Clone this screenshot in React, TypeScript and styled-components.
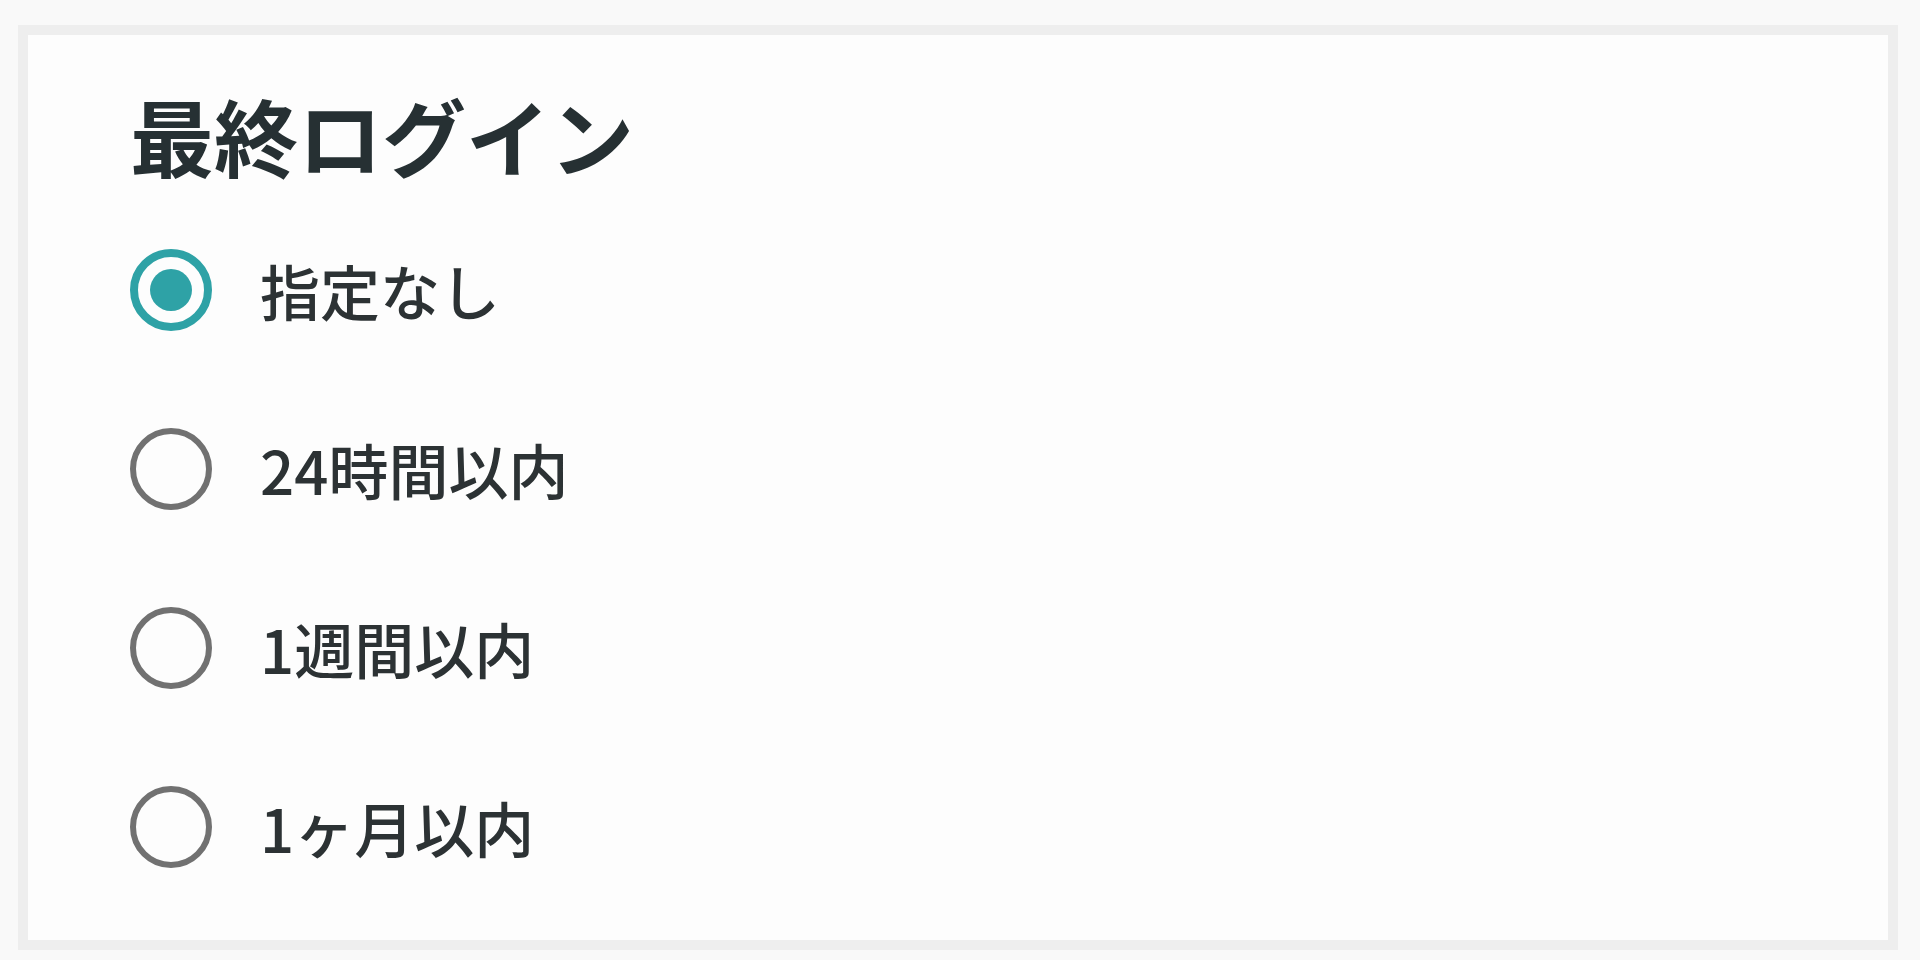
import React, { useState } from "react";
import styled, { createGlobalStyle } from "styled-components";

const GlobalStyle = createGlobalStyle`
  html, body {
    margin: 0;
    padding: 0;
    background: #f9f9f9;
  }
  body {
    font-family: "Noto Sans CJK JP", "Noto Sans", sans-serif;
    color: #2f3537;
  }
  * { box-sizing: border-box; }
`;

const Page = styled.div`
  width: 1920px;
  height: 960px;
  padding: 25px 22px 10px 18px;
`;

const Card = styled.section`
  height: 100%;
  border: 10px solid #eeeeee;
  background: #fdfdfd;
  padding: 58px 0 0 102px;
  display: flex;
  flex-direction: column;
`;

const Title = styled.h2`
  margin: 0 0 23px 0;
  font-size: 84px;
  line-height: 84px;
  font-weight: 700;
  color: #263033;
  letter-spacing: 0;
`;

const Options = styled.div`
  display: flex;
  flex-direction: column;
`;

const Row = styled.label`
  display: flex;
  align-items: center;
  gap: 48px;
  height: 179px;
  cursor: pointer;
`;

const HiddenInput = styled.input`
  position: absolute;
  opacity: 0;
  width: 0;
  height: 0;
`;

const Circle = styled.span<{ $checked: boolean }>`
  flex: none;
  width: 82px;
  height: 82px;
  border-radius: 50%;
  border: ${(p) => (p.$checked ? "8px solid #2ea2a6" : "6px solid #717171")};
  display: flex;
  align-items: center;
  justify-content: center;
`;

const Dot = styled.span`
  width: 42px;
  height: 42px;
  border-radius: 50%;
  background: #2ea2a6;
`;

const OptionText = styled.span`
  font-size: 60px;
  line-height: 1;
  font-weight: 500;
  color: #2c3234;
`;

const choices = ["指定なし", "24時間以内", "1週間以内", "1ヶ月以内"];

export default function App() {
  const [value, setValue] = useState(choices[0]);
  return (
    <>
      <GlobalStyle />
      <Page>
        <Card>
          <Title>最終ログイン</Title>
          <Options role="radiogroup">
            {choices.map((c) => (
              <Row key={c}>
                <HiddenInput
                  type="radio"
                  name="last-login"
                  checked={value === c}
                  onChange={() => setValue(c)}
                />
                <Circle $checked={value === c}>{value === c && <Dot />}</Circle>
                <OptionText>{c}</OptionText>
              </Row>
            ))}
          </Options>
        </Card>
      </Page>
    </>
  );
}
